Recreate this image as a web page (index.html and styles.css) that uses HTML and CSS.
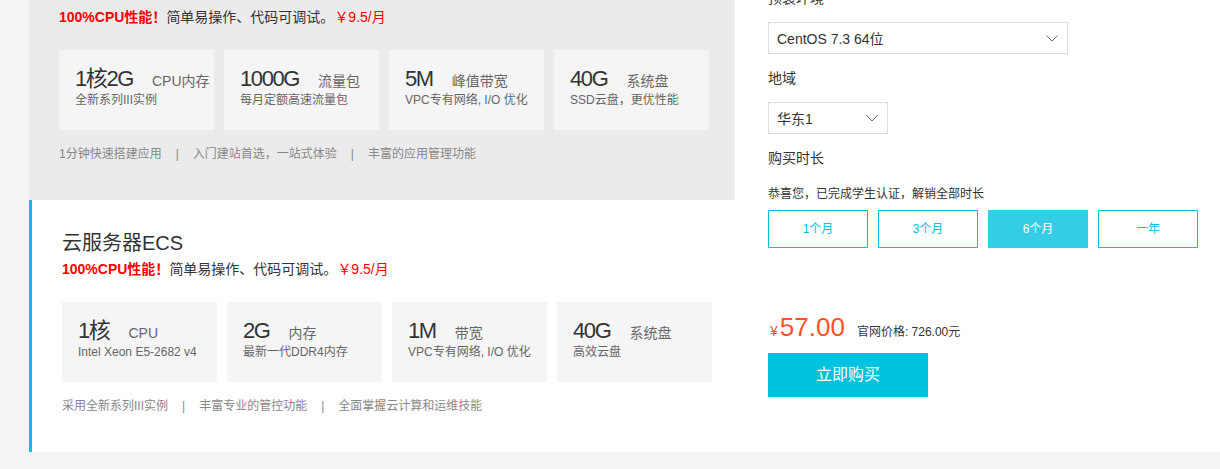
FILE: index.html
```html
<!DOCTYPE html>
<html lang="zh-CN">
<head>
<meta charset="utf-8">
<title>云服务器</title>
<link rel="stylesheet" href="styles.css">
</head>
<body>
<div class="page">
  <div class="products">
    <div class="product product-muted">
      <div class="product-title">轻量应用服务器</div>
      <div class="product-sub"><span class="hot">100%CPU性能！</span>简单易操作、代码可调试。<span class="price-tag">￥9.5/月</span></div>
      <div class="specs">
        <div class="spec"><div class="spec-main"><span class="big">1核2G</span><span class="unit">CPU内存</span></div><div class="spec-sub">全新系列III实例</div></div>
        <div class="spec"><div class="spec-main"><span class="big">1000G</span><span class="unit">流量包</span></div><div class="spec-sub">每月定额高速流量包</div></div>
        <div class="spec"><div class="spec-main"><span class="big">5M</span><span class="unit">峰值带宽</span></div><div class="spec-sub">VPC专有网络, I/O 优化</div></div>
        <div class="spec"><div class="spec-main"><span class="big">40G</span><span class="unit">系统盘</span></div><div class="spec-sub">SSD云盘，更优性能</div></div>
      </div>
      <div class="features"><span>1分钟快速搭建应用</span><span class="sep">|</span><span>入门建站首选，一站式体验</span><span class="sep">|</span><span>丰富的应用管理功能</span></div>
    </div>
    <div class="product product-active">
      <div class="product-title">云服务器ECS</div>
      <div class="product-sub"><span class="hot">100%CPU性能！</span>简单易操作、代码可调试。<span class="price-tag">￥9.5/月</span></div>
      <div class="specs">
        <div class="spec"><div class="spec-main"><span class="big">1核</span><span class="unit">CPU</span></div><div class="spec-sub">Intel Xeon E5-2682 v4</div></div>
        <div class="spec"><div class="spec-main"><span class="big">2G</span><span class="unit">内存</span></div><div class="spec-sub">最新一代DDR4内存</div></div>
        <div class="spec"><div class="spec-main"><span class="big">1M</span><span class="unit">带宽</span></div><div class="spec-sub">VPC专有网络, I/O 优化</div></div>
        <div class="spec"><div class="spec-main"><span class="big">40G</span><span class="unit">系统盘</span></div><div class="spec-sub">高效云盘</div></div>
      </div>
      <div class="features"><span>采用全新系列III实例</span><span class="sep">|</span><span>丰富专业的管控功能</span><span class="sep">|</span><span>全面掌握云计算和运维技能</span></div>
    </div>
  </div>
  <div class="order">
    <div class="field-label">预装环境</div>
    <div class="select select-wide"><span>CentOS 7.3 64位</span><svg class="chev" width="12" height="7" viewBox="0 0 12 7"><polyline points="0.5,0.5 6,6 11.5,0.5" fill="none" stroke="#666" stroke-width="1"/></svg></div>
    <div class="field-label">地域</div>
    <div class="select select-narrow"><span>华东1</span><svg class="chev" width="12" height="7" viewBox="0 0 12 7"><polyline points="0.5,0.5 6,6 11.5,0.5" fill="none" stroke="#666" stroke-width="1"/></svg></div>
    <div class="field-label">购买时长</div>
    <div class="note">恭喜您，已完成学生认证，解销全部时长</div>
    <div class="durations">
      <div class="duration">1个月</div>
      <div class="duration">3个月</div>
      <div class="duration duration-on">6个月</div>
      <div class="duration">一年</div>
    </div>
    <div class="price-row"><span class="yen">¥</span><span class="amount">57.00</span><span class="list-price">官网价格: 726.00元</span></div>
    <div class="buy">立即购买</div>
  </div>
</div>
</body>
</html>
```
FILE: styles.css
```css
html, body {
  margin: 0;
  padding: 0;
}
body {
  background: #f4f4f4;
  font-family: "Liberation Sans", "Noto Sans CJK SC", sans-serif;
  color: #333;
  overflow: hidden;
  height: 469px;
}
.page {
  display: flex;
  margin: -52px 0 0 29px;
}
.products {
  width: 706px;
  display: flex;
  flex-direction: column;
}
.product {
  height: 252px;
  box-sizing: border-box;
  padding: 30px 0 0 30px;
}
.product-muted {
  background: #ebebeb;
}
.product-active {
  background: #fff;
  border-left: 3px solid #00c1de;
}
.product-title {
  font-size: 20px;
  line-height: 26px;
  color: #333;
}
.product-sub {
  margin-top: 3px;
  font-size: 14px;
  line-height: 20px;
  color: #333;
}
.hot {
  color: #f00;
  font-weight: bold;
}
.price-tag {
  color: #f00;
}
.specs {
  display: flex;
  gap: 10px;
  margin-top: 23px;
}
.spec {
  width: 155px;
  height: 80px;
  box-sizing: border-box;
  background: #f5f5f5;
  padding: 17px 0 0 16px;
}
.spec-main {
  line-height: 24px;
  white-space: nowrap;
}
.big {
  font-size: 22px;
  letter-spacing: -1.4px;
  color: #333;
}
.unit {
  font-size: 14px;
  color: #666;
  margin-left: 19px;
}
.spec-sub {
  font-size: 12px;
  line-height: 15px;
  color: #666;
  white-space: nowrap;
}
.features {
  margin-top: 15px;
  font-size: 12px;
  line-height: 18px;
  color: #888;
}
.sep {
  margin: 0 14px;
}
.order {
  flex: 1;
  background: #fff;
  height: 504px;
  box-sizing: border-box;
  padding: 40px 0 0 33px;
}
.field-label {
  font-size: 14px;
  line-height: 20px;
  color: #333;
  margin-bottom: 14px;
}
.select {
  height: 32px;
  box-sizing: border-box;
  border: 1px solid #ddd;
  display: flex;
  align-items: center;
  justify-content: space-between;
  padding: 0 9px 0 8px;
  font-size: 14px;
  color: #333;
  margin-bottom: 14px;
}
.select-wide {
  width: 300px;
}
.select-narrow {
  width: 120px;
}
.chev {
  display: block;
}
.note {
  margin-top: 17px;
  font-size: 12px;
  line-height: 18px;
  color: #333;
}
.durations {
  display: flex;
  gap: 10px;
  margin-top: 7px;
}
.duration {
  width: 100px;
  height: 38px;
  box-sizing: border-box;
  border: 1px solid #00c1de;
  color: #00c1de;
  font-size: 12px;
  line-height: 36px;
  text-align: center;
}
.duration-on {
  background: #35cde5;
  border-color: #35cde5;
  color: #fff;
}
.price-row {
  margin-top: 63px;
  line-height: 32px;
  white-space: nowrap;
  color: #ff5226;
}
.yen {
  font-size: 14px;
  margin-left: 2px;
}
.amount {
  font-size: 26px;
  margin-left: 2px;
}
.list-price {
  font-size: 12px;
  color: #333;
  margin-left: 12px;
}
.buy {
  margin-top: 5px;
  width: 160px;
  height: 44px;
  background: #00c1de;
  color: #fff;
  font-size: 16px;
  line-height: 44px;
  text-align: center;
}
```
